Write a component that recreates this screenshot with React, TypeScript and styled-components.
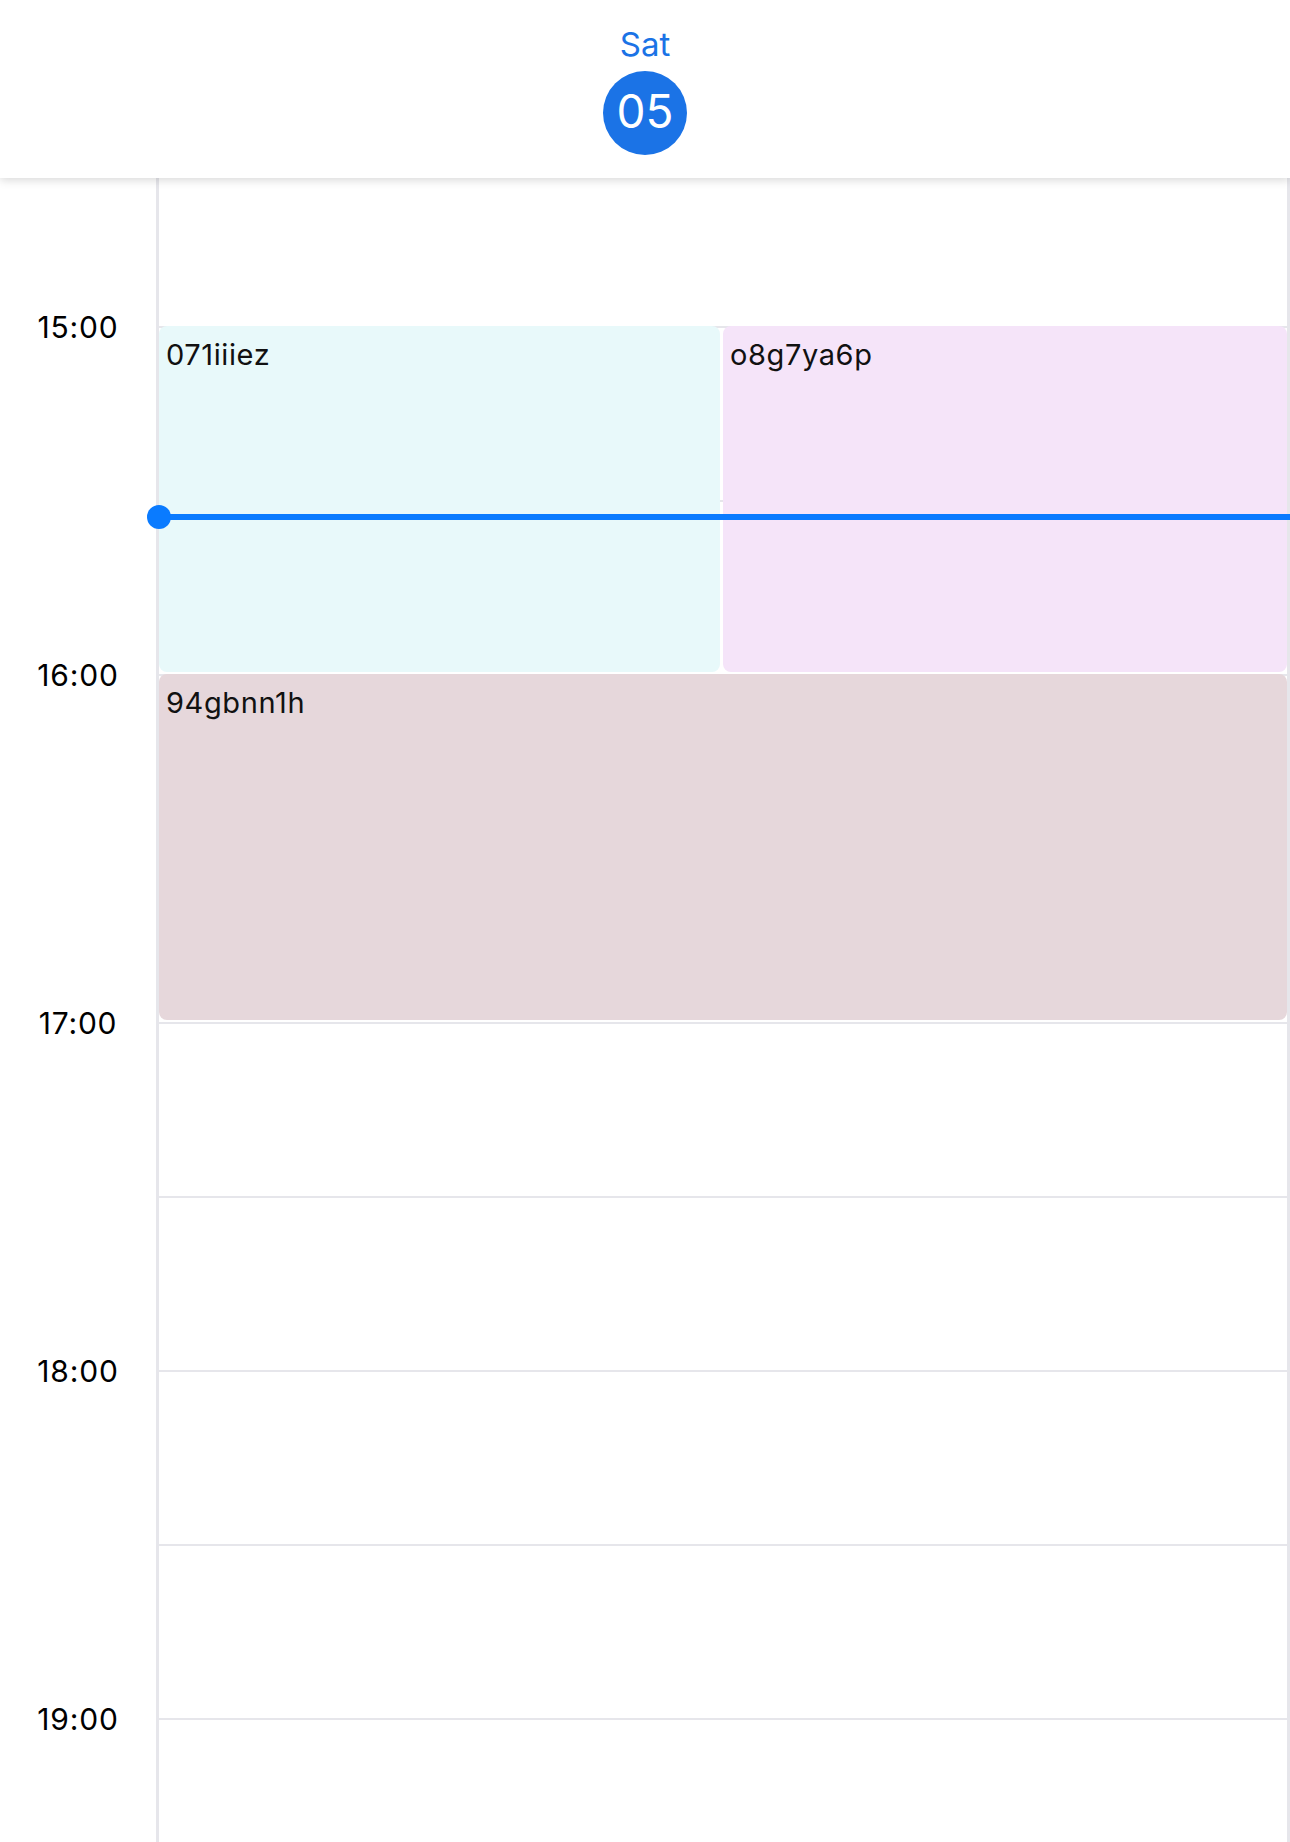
import React from 'react';
import styled, { createGlobalStyle } from 'styled-components';

const HOUR = 348;
const START_HOUR = 15;
const LEAD = 148;

interface CalEvent {
  title: string;
  start: number;
  end: number;
  color: string;
  col: number;
  cols: number;
}

const events: CalEvent[] = [
  { title: '071iiiez', start: 15, end: 16, color: '#e8f9fa', col: 0, cols: 2 },
  { title: 'o8g7ya6p', start: 15, end: 16, color: '#f5e4f9', col: 1, cols: 2 },
  { title: '94gbnn1h', start: 16, end: 17, color: '#e6d7db', col: 0, cols: 1 },
];

const hours = [15, 16, 17, 18, 19];
const slots = Array.from({ length: 10 }, (_, i) => i);
const now = 15.55;

const toY = (h: number) => LEAD + (h - START_HOUR) * HOUR;

function App() {
  return (
    <Page>
      <GlobalStyle />
      <Header>
        <DayName>Sat</DayName>
        <DayNumber>05</DayNumber>
      </Header>
      <Body>
        <Gutter>
          <Lead />
          {hours.map(h => (
            <HourCell key={h}>
              <HourLabel>{h}:00</HourLabel>
            </HourCell>
          ))}
        </Gutter>
        <DayColumn>
          <Lead />
          {slots.map(s => <Slot key={s} />)}
          {events.map(ev => (
            <EventBox
              key={ev.title}
              $color={ev.color}
              $last={ev.col === ev.cols - 1}
              style={{
                top: toY(ev.start),
                height: (ev.end - ev.start) * HOUR - 2,
                left: `${(ev.col / ev.cols) * 100}%`,
                width: `${100 / ev.cols}%`,
              }}
            >
              {ev.title}
            </EventBox>
          ))}
          <NowLine style={{ top: toY(now) - 3 }}>
            <NowDot />
          </NowLine>
        </DayColumn>
      </Body>
    </Page>
  );
}

export default App;

const GlobalStyle = createGlobalStyle`
  body {
    margin: 0;
    background: #fff;
    font-family: Inter, "Noto Sans", sans-serif;
    color: #000;
  }
`;

const Page = styled.div`
  display: flex;
  flex-direction: column;

  width: 1290px;
  height: 1842px;
  overflow: hidden;
`;

const Header = styled.header`
  position: relative;
  z-index: 3;

  display: flex;
  flex-direction: column;
  align-items: center;
  gap: 7px;

  height: 178px;
  flex-shrink: 0;
  box-sizing: border-box;
  padding-top: 24px;

  background: #fff;
  box-shadow: 0 2px 9px rgba(0, 0, 0, 0.16);
`;

const DayName = styled.div`
  font-size: 33px;
  line-height: 40px;
  color: #1b73e6;
`;

const DayNumber = styled.div`
  display: flex;
  justify-content: center;
  align-items: center;

  width: 84px;
  height: 84px;
  padding-bottom: 4px;
  box-sizing: border-box;

  border-radius: 50%;
  background: #1b73e6;

  font-size: 46px;
  line-height: 1;
  color: #fff;
`;

const Body = styled.div`
  display: flex;
  flex: 1;
  overflow: hidden;
`;

const Gutter = styled.div`
  display: flex;
  flex-direction: column;

  width: 156px;
  flex-shrink: 0;
`;

const Lead = styled.div`
  height: ${LEAD}px;
  flex-shrink: 0;
`;

const HourCell = styled.div`
  display: flex;
  justify-content: center;

  height: ${HOUR}px;
  flex-shrink: 0;
`;

const HourLabel = styled.div`
  height: 36px;
  margin-top: -17px;

  font-size: 30px;
  line-height: 36px;
  letter-spacing: 0.8px;
`;

const DayColumn = styled.div`
  position: relative;

  display: flex;
  flex-direction: column;
  flex: 1;

  border-left: 3px solid #e6e6eb;
  border-right: 3px solid #e6e6eb;
`;

const Slot = styled.div`
  height: ${HOUR / 2}px;
  flex-shrink: 0;
  box-sizing: border-box;

  border-top: 2.5px solid #e6e6eb;
`;

const EventBox = styled.div<{ $color: string; $last: boolean }>`
  position: absolute;
  z-index: 1;

  box-sizing: border-box;
  max-width: ${p => (p.$last ? '100%' : 'calc(50% - 3px)')};
  padding: 11px 7px;

  border-radius: 8px;
  background: ${p => p.$color};

  font-size: 29px;
  line-height: 36px;
  letter-spacing: 0.6px;
  color: #111;
`;

const NowLine = styled.div`
  position: absolute;
  z-index: 2;
  left: 0;
  right: -3px;

  height: 6px;
  background: #0a7bff;
`;

const NowDot = styled.div`
  position: absolute;
  left: -12px;
  top: -9px;

  width: 24px;
  height: 24px;

  border-radius: 50%;
  background: #0a7bff;
`;
